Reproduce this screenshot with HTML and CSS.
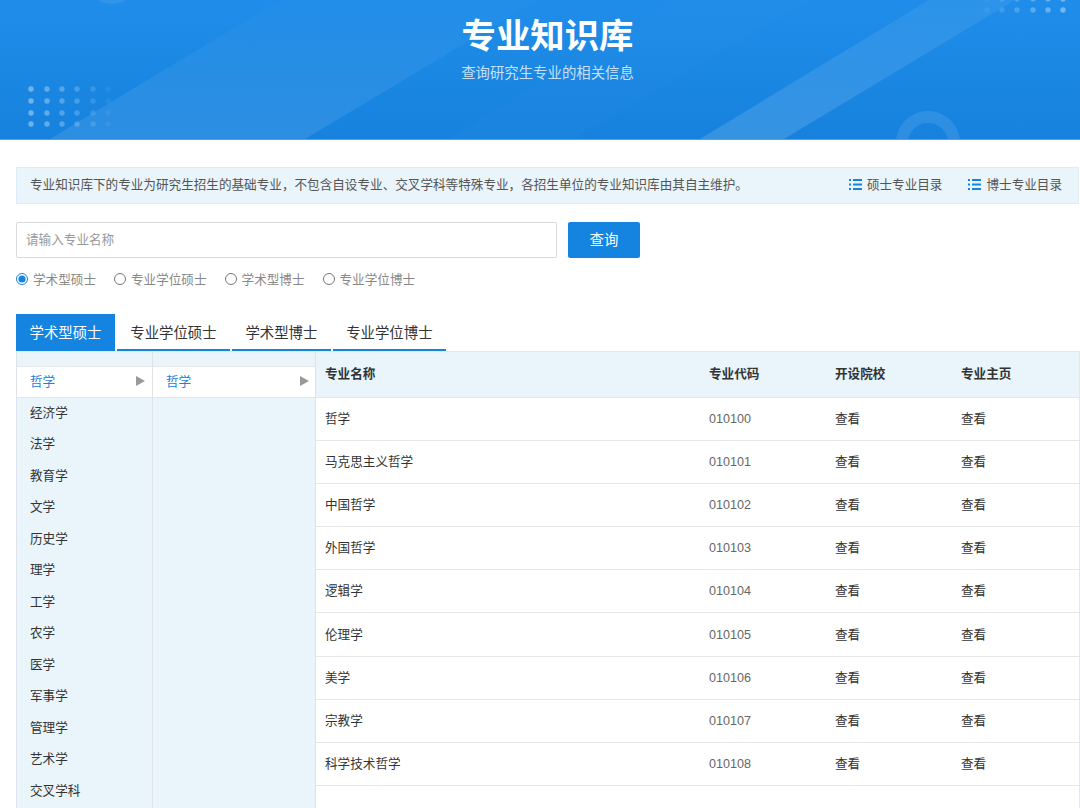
FILE: index.html
```html
<!DOCTYPE html>
<html lang="zh-CN">
<head>
  <meta charset="UTF-8" />
  <title>专业知识库</title>
  <link rel="stylesheet" href="styles.css">
</head>
<body>
  <header class="banner">
    <svg class="banner-art" width="1080" height="139" viewBox="0 0 1080 139">
      <defs>
        <linearGradient id="fade" x1="0" y1="1" x2="0" y2="0">
          <stop offset="0" stop-color="#fff" stop-opacity="0.1"/>
          <stop offset="1" stop-color="#fff" stop-opacity="0.01"/>
        </linearGradient>
        <linearGradient id="fade2" x1="0" y1="1" x2="0" y2="0">
          <stop offset="0" stop-color="#fff" stop-opacity="0.14"/>
          <stop offset="1" stop-color="#fff" stop-opacity="0.06"/>
        </linearGradient>
      </defs>
      <polygon points="50,139 280,0 537,0 305,139" fill="url(#fade)"/>
      <polygon points="448,139 675,0 809,0 574,139" fill="#fff" fill-opacity="0.015"/>
      <polygon points="700,139 929,0 1015,0 784,139" fill="url(#fade2)"/>
      <circle cx="928" cy="143" r="26" fill="none" stroke="#fff" stroke-opacity="0.1" stroke-width="12"/>
      <circle cx="112" cy="-22" r="26" fill="#fff" fill-opacity="0.08"/>
      <g fill="#fff">
        <circle cx="31" cy="89" r="2.700" opacity=".38"/><circle cx="47" cy="89" r="2.700" opacity=".32"/><circle cx="62" cy="89" r="2.700" opacity=".26"/><circle cx="77" cy="89" r="2.700" opacity=".2"/><circle cx="93" cy="89" r="2.700" opacity=".13"/><circle cx="108" cy="89" r="2.700" opacity=".06"/>
        <circle cx="31" cy="101" r="2.700" opacity=".38"/><circle cx="47" cy="101" r="2.700" opacity=".32"/><circle cx="62" cy="101" r="2.700" opacity=".26"/><circle cx="77" cy="101" r="2.700" opacity=".2"/><circle cx="93" cy="101" r="2.700" opacity=".13"/><circle cx="108" cy="101" r="2.700" opacity=".06"/>
        <circle cx="31" cy="113" r="2.700" opacity=".38"/><circle cx="47" cy="113" r="2.700" opacity=".32"/><circle cx="62" cy="113" r="2.700" opacity=".26"/><circle cx="77" cy="113" r="2.700" opacity=".2"/><circle cx="93" cy="113" r="2.700" opacity=".13"/><circle cx="108" cy="113" r="2.700" opacity=".06"/>
        <circle cx="31" cy="124" r="2.700" opacity=".38"/><circle cx="47" cy="124" r="2.700" opacity=".32"/><circle cx="62" cy="124" r="2.700" opacity=".26"/><circle cx="77" cy="124" r="2.700" opacity=".2"/><circle cx="93" cy="124" r="2.700" opacity=".13"/><circle cx="108" cy="124" r="2.700" opacity=".06"/>
        <circle cx="987" cy="10" r="2.700" opacity=".06"/><circle cx="1002" cy="10" r="2.700" opacity=".13"/><circle cx="1017" cy="10" r="2.700" opacity=".2"/><circle cx="1033" cy="10" r="2.700" opacity=".26"/><circle cx="1048" cy="10" r="2.700" opacity=".32"/><circle cx="1063" cy="10" r="2.700" opacity=".38"/>
        <circle cx="987" cy="-1" r="2.700" opacity=".06"/><circle cx="1002" cy="-1" r="2.700" opacity=".13"/><circle cx="1017" cy="-1" r="2.700" opacity=".2"/><circle cx="1033" cy="-1" r="2.700" opacity=".26"/><circle cx="1048" cy="-1" r="2.700" opacity=".32"/><circle cx="1063" cy="-1" r="2.700" opacity=".38"/>
      </g>
    </svg>
    <h1>专业知识库</h1>
    <p>查询研究生专业的相关信息</p>
  </header>

  <main class="page">
    <div class="notice">
      <span class="notice-text">专业知识库下的专业为研究生招生的基础专业，不包含自设专业、交叉学科等特殊专业，各招生单位的专业知识库由其自主维护。</span>
      <a class="catalog-link">
        <svg width="13" height="11" viewBox="0 0 13 11"><path d="M0 0h2v2H0zM0 4.500h2v2H0zM0 9h2v2H0zM4 0h9v2H4zM4 4.500h9v2H4zM4 9h9v2H4z" fill="#1583e0"/></svg>
        硕士专业目录
      </a>
      <a class="catalog-link">
        <svg width="13" height="11" viewBox="0 0 13 11"><path d="M0 0h2v2H0zM0 4.500h2v2H0zM0 9h2v2H0zM4 0h9v2H4zM4 4.500h9v2H4zM4 9h9v2H4z" fill="#1583e0"/></svg>
        博士专业目录
      </a>
    </div>

    <div class="search">
      <input class="search-input" type="text" placeholder="请输入专业名称" />
      <button class="search-btn">查询</button>
    </div>

    <div class="radios">
      <label class="radio"><input type="radio" name="kind" checked />学术型硕士</label>
      <label class="radio"><input type="radio" name="kind" />专业学位硕士</label>
      <label class="radio"><input type="radio" name="kind" />学术型博士</label>
      <label class="radio"><input type="radio" name="kind" />专业学位博士</label>
    </div>

    <div class="tabs">
      <div class="tab active">学术型硕士</div>
      <div class="tab">专业学位硕士</div>
      <div class="tab">学术型博士</div>
      <div class="tab">专业学位博士</div>
    </div>

    <div class="panel">
      <ul class="menu menu-first">
        <li class="on">哲学<i class="arrow"></i></li>
        <li>经济学</li>
        <li>法学</li>
        <li>教育学</li>
        <li>文学</li>
        <li>历史学</li>
        <li>理学</li>
        <li>工学</li>
        <li>农学</li>
        <li>医学</li>
        <li>军事学</li>
        <li>管理学</li>
        <li>艺术学</li>
        <li>交叉学科</li>
      </ul>
      <ul class="menu menu-second">
        <li class="on">哲学<i class="arrow"></i></li>
      </ul>
      <table class="majors">
        <thead>
          <tr><th class="col-name">专业名称</th><th class="col-code">专业代码</th><th class="col-link">开设院校</th><th>专业主页</th></tr>
        </thead>
        <tbody>
          <tr><td>哲学</td><td class="code">010100</td><td>查看</td><td>查看</td></tr>
          <tr><td>马克思主义哲学</td><td class="code">010101</td><td>查看</td><td>查看</td></tr>
          <tr><td>中国哲学</td><td class="code">010102</td><td>查看</td><td>查看</td></tr>
          <tr><td>外国哲学</td><td class="code">010103</td><td>查看</td><td>查看</td></tr>
          <tr><td>逻辑学</td><td class="code">010104</td><td>查看</td><td>查看</td></tr>
          <tr><td>伦理学</td><td class="code">010105</td><td>查看</td><td>查看</td></tr>
          <tr><td>美学</td><td class="code">010106</td><td>查看</td><td>查看</td></tr>
          <tr><td>宗教学</td><td class="code">010107</td><td>查看</td><td>查看</td></tr>
          <tr><td>科学技术哲学</td><td class="code">010108</td><td>查看</td><td>查看</td></tr>
        </tbody>
      </table>
    </div>
  </main>
</body>
</html>
```

FILE: styles.css
```css
* {
  box-sizing: border-box;
}
html, body {
  height: 808px;
  overflow: hidden;
}
body {
  margin: 0;
  font-family: "Liberation Sans", "Noto Sans CJK SC", sans-serif;
  font-size: 12.6px;
  color: #333;
  background: #fff;
}

/* banner */
.banner {
  position: relative;
  height: 140px;
  padding: 15px 0 0 15px;
  text-align: center;
  color: #fff;
  background: linear-gradient(180deg, #1f8de9 0%, #1682de 100%);
  border-bottom: 1px solid #4ba3ea;
  overflow: hidden;
}
.banner-art {
  position: absolute;
  left: 0;
  top: 0;
}
.banner h1 {
  position: relative;
  margin: 0;
  font-size: 34.4px;
  line-height: 42px;
  font-weight: bold;
}
.banner p {
  position: relative;
  margin: 4px 0 0;
  font-size: 14.4px;
  line-height: 24px;
  color: #c4e0f8;
}

.page {
  padding: 27px 0 0 16px;
}

/* notice */
.notice {
  display: flex;
  align-items: center;
  height: 37px;
  padding: 0 16px 5px 13px;
  margin-right: 1px;
  background: #e9f4fb;
  border: 1px solid #dcecf8;
  color: #555;
}
.notice-text {
  flex: 1;
}
.catalog-link {
  display: flex;
  align-items: center;
  gap: 5px;
  margin-left: 26px;
  color: #555;
}
.catalog-link svg {
  position: relative;
  top: 1px;
}

/* search */
.search {
  display: flex;
  gap: 11px;
  margin-top: 18px;
}
.search-input {
  width: 541px;
  height: 36px;
  padding: 0 9px;
  font: inherit;
  border: 1px solid #d9d9d9;
  border-radius: 2px;
  outline: none;
}
.search-input::placeholder {
  color: #999;
}
.search-btn {
  width: 72px;
  height: 36px;
  padding: 0 0 3px;
  font: inherit;
  font-size: 14.4px;
  color: #fff;
  background: #1583e0;
  border: none;
  border-radius: 2px;
}

.radios {
  display: flex;
  gap: 18px;
  margin-top: 12px;
  height: 18px;
}
.radio {
  display: flex;
  align-items: center;
  padding-bottom: 2px;
  color: #888;
}
.radio input {
  position: relative;
  top: 1px;
  width: 12px;
  height: 12px;
  margin: 0 5px 0 0;
  accent-color: #1583e0;
}

/* tabs */
.tabs {
  display: flex;
  gap: 1.800px;
  margin-top: 26px;
  height: 37px;
}
.tab {
  padding: 0 13.500px;
  font-size: 14.4px;
  line-height: 38px;
  color: #333;
  border-bottom: 2px solid #1583e0;
}
.tab.active {
  color: #fff;
  background: #1583e0;
}

/* panel */
.panel {
  display: flex;
  align-items: stretch;
  height: 480px;
  border: 1px solid #e4e8eb;
  border-left: none;
  border-bottom: none;
}
.menu {
  margin: 0;
  padding: 14px 0 0;
  list-style: none;
  background: #e9f4fb;
  border-right: 1px solid #dde3e8;
}
.menu-first {
  width: 137px;
  border-left: 1px solid #dde3e8;
}
.menu-second {
  width: 163px;
}
.menu li {
  position: relative;
  height: 31.500px;
  padding-left: 13px;
  line-height: 30.600px;
}
.menu li.on {
  line-height: 30px;
  color: #1583e0;
  background: #fff;
  border-top: 1px solid #e4e8eb;
  border-bottom: 1px solid #e4e8eb;
}
.arrow {
  position: absolute;
  right: 7px;
  top: 9px;
  width: 0;
  height: 0;
  border-left: 9px solid #999;
  border-top: 5px solid transparent;
  border-bottom: 5px solid transparent;
}
.menu-second .arrow {
  right: 6px;
}

/* table */
.majors {
  flex: 1;
  align-self: flex-start;
  border-collapse: collapse;
  table-layout: fixed;
}
.majors th, .majors td {
  padding: 0 0 0 9px;
  text-align: left;
  border-bottom: 1px solid #e4e8eb;
}
.majors th {
  height: 45px;
  padding-bottom: 4px;
  font-weight: bold;
  background: #e9f4fb;
}
.majors td {
  height: 43.200px;
  padding-bottom: 3px;
}
.col-name {
  width: 384px;
}
.col-code, .col-link {
  width: 126px;
}
.majors td.code {
  padding-bottom: 0;
  color: #666;
}
```
